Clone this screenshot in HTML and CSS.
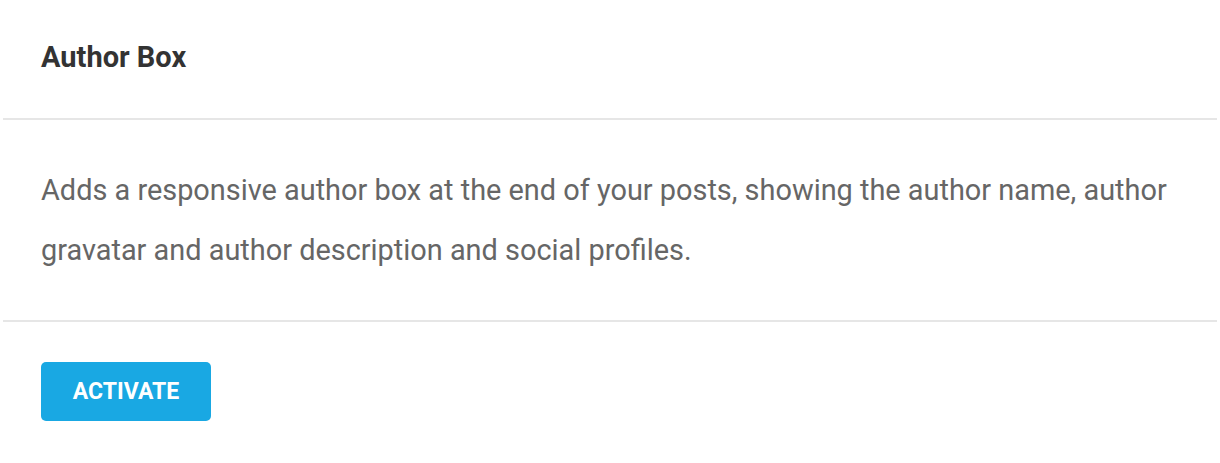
FILE: index.html
```html
<!DOCTYPE html>
<html>
<head>
<meta charset="utf-8">
<link rel="stylesheet" href="styles.css">
</head>
<body>
<div class="card">
  <div class="card-header">
    <h2 class="card-title">Author Box</h2>
  </div>
  <div class="card-body">
    <p class="card-text">Adds a responsive author box at the end of your posts, showing the author name, author gravatar and author description and social profiles.</p>
  </div>
  <div class="card-footer">
    <button class="btn-activate">ACTIVATE</button>
  </div>
</div>
</body>
</html>
```
FILE: styles.css
```css
html, body {
  margin: 0;
  padding: 0;
  background: #ffffff;
}
body {
  font-family: Roboto, "Liberation Sans", sans-serif;
}
.card {
  margin: 0 3px;
  background: #ffffff;
}
.card-header {
  display: flex;
  align-items: center;
  padding: 0 38px 4px;
  border-bottom: 2px solid #e6e6e6;
  box-sizing: border-box;
  height: 120px;
}
.card-title {
  margin: 0;
  font-size: 29px;
  font-weight: 700;
  color: #333333;
  line-height: 1;
}
.card-body {
  padding: 40px 38px;
  height: 202px;
  box-sizing: border-box;
  border-bottom: 2px solid #e6e6e6;
}
.card-text {
  margin: 0;
  font-size: 28.9px;
  line-height: 60px;
  color: #666666;
}
.card-footer {
  padding: 40px 38px;
}
.btn-activate {
  width: 170px;
  height: 59px;
  border: none;
  border-radius: 5px;
  background: #19a8e3;
  color: #ffffff;
  font-family: Roboto, "Liberation Sans", sans-serif;
  font-size: 23px;
  font-weight: 700;
  padding: 0;
  cursor: pointer;
}
```
